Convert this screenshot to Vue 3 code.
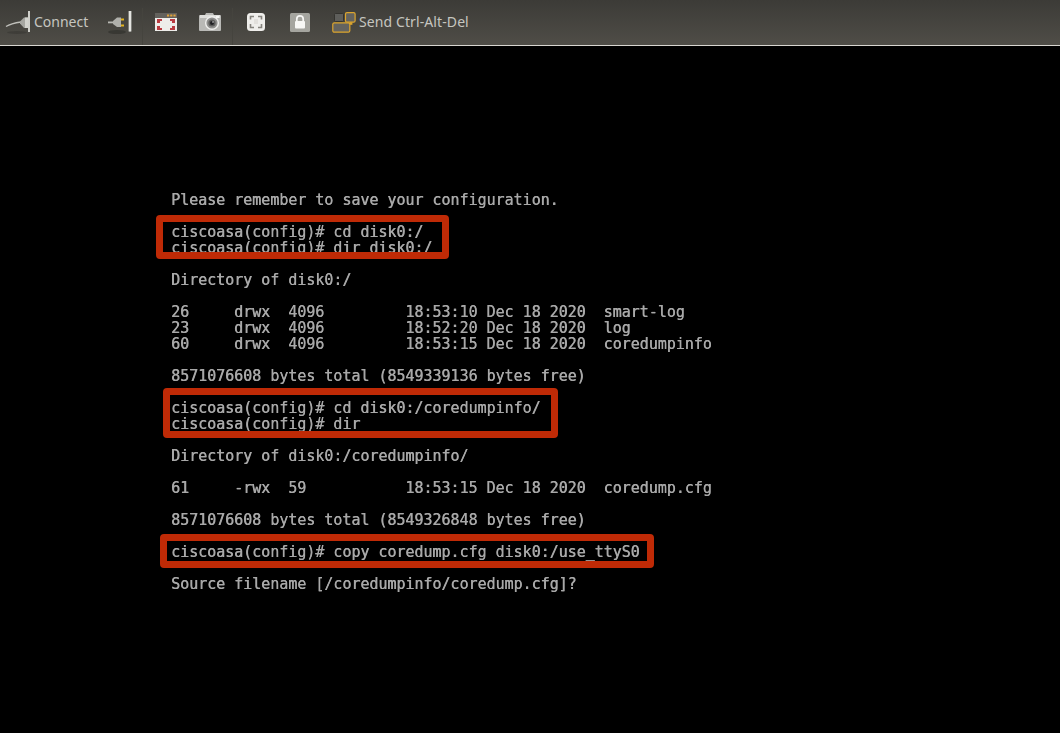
<script setup>
const lines = [
  'Please remember to save your configuration.',
  '',
  'ciscoasa(config)# cd disk0:/',
  'ciscoasa(config)# dir disk0:/',
  '',
  'Directory of disk0:/',
  '',
  '26     drwx  4096         18:53:10 Dec 18 2020  smart-log',
  '23     drwx  4096         18:52:20 Dec 18 2020  log',
  '60     drwx  4096         18:53:15 Dec 18 2020  coredumpinfo',
  '',
  '8571076608 bytes total (8549339136 bytes free)',
  '',
  'ciscoasa(config)# cd disk0:/coredumpinfo/',
  'ciscoasa(config)# dir',
  '',
  'Directory of disk0:/coredumpinfo/',
  '',
  '61     -rwx  59           18:53:15 Dec 18 2020  coredump.cfg',
  '',
  '8571076608 bytes total (8549326848 bytes free)',
  '',
  'ciscoasa(config)# copy coredump.cfg disk0:/use_ttyS0',
  '',
  'Source filename [/coredumpinfo/coredump.cfg]?'
]
</script>

<template>
  <div class="page">
    <header class="toolbar">
      <div class="tool connect">
        <svg width="27" height="32" viewBox="0 0 27 32">
          <ellipse cx="13" cy="24.5" rx="10" ry="1.5" fill="#3a3934" opacity=".7" />
          <path d="M2 18.5 C6 16 10 15 17 14" fill="none" stroke="#c0c0bb" stroke-width="1.4" />
          <path d="M16 13.5 L20 9.5 H24 V20 H20 L16 15.5 Z" fill="#a6a6a1" />
          <path d="M21 9.5 H24 V20 H21 Z" fill="#d2d2cd" />
          <rect x="24" y="3" width="2" height="21" fill="#cfcfca" />
        </svg>
        <span>Connect</span>
      </div>
      <div class="tool disconnect">
        <svg width="28" height="32" viewBox="0 0 28 32">
          <ellipse cx="13" cy="24" rx="9" ry="2" fill="#35342f" opacity=".8" />
          <rect x="4" y="13.5" width="6" height="1.8" fill="#b8b8b3" />
          <path d="M9 13 L13 9.5 H17 V19 H13 L9 16 Z" fill="#b0b0ab" />
          <rect x="17" y="10.5" width="3" height="2" fill="#e4b41f" />
          <rect x="17" y="16.5" width="3" height="2" fill="#e4b41f" />
          <rect x="24" y="3" width="4" height="20.5" fill="#7f7f7a" />
          <rect x="25" y="3" width="2" height="20.5" fill="#e4e4e0" />
        </svg>
      </div>
      <i class="sep" />
      <div class="tool video">
        <svg width="22" height="32" viewBox="0 0 22 32">
          <rect y="5" width="22" height="18" fill="#eeedea" />
          <rect y="5" width="22" height="5" fill="#63615c" />
          <rect x="12" y="6.5" width="2.2" height="2" fill="#e2a33a" />
          <rect x="15.2" y="6.5" width="2.2" height="2" fill="#e2a33a" />
          <rect x="18.4" y="6.5" width="2.2" height="2" fill="#e2a33a" />
          <path d="M2 11h5v2H5v2H2zM15 11h5v4h-3v-2h-2zM2 18h3v2h2v2H2zM17 18h3v4h-5v-2h2z" fill="#b93a40" />
        </svg>
      </div>
      <div class="tool camera">
        <svg width="22" height="32" viewBox="0 0 22 32">
          <path d="M1 7 H6 L7 5 H14 L15 7 H21 Q22 7 22 8 V22 Q22 23 21 23 H1 Q0 23 0 22 V8 Q0 7 1 7Z" fill="#b9b9b6" />
          <path d="M1 7 H21 V10 H1 Z" fill="#dededb" />
          <rect x="17" y="8" width="3" height="2" fill="#f7f7f5" />
          <circle cx="13" cy="15" r="7" fill="#efefed" />
          <circle cx="13" cy="15" r="5.6" fill="#8f8f8d" />
          <circle cx="13" cy="15" r="3.6" fill="#5b5b5a" />
          <circle cx="13" cy="15" r="2" fill="#1f1f22" />
          <circle cx="14" cy="14" r=".8" fill="#d5d5d5" />
        </svg>
      </div>
      <i class="sep" />
      <div class="tool keys">
        <svg width="18" height="32" viewBox="0 0 18 32">
          <rect y="5" width="18" height="18" rx="3.5" fill="#efeeeb" />
          <path d="M3.5 11.5V8.5H7M11 8.5h3.5v3M14.5 16v3.5H11M7 19.5H3.5V16" fill="none" stroke="#85837d" stroke-width="1.6" />
          <path d="M7 11h4v5H7z" fill="#e2e0dc" />
        </svg>
      </div>
      <div class="tool lock">
        <svg width="20" height="32" viewBox="0 0 20 32">
          <rect y="5" width="20" height="19" rx="1.5" fill="#a5a59f" />
          <path d="M6.8 13V11a3.2 3.2 0 0 1 6.4 0V13" fill="none" stroke="#f7f7f5" stroke-width="1.7" />
          <rect x="5" y="13" width="10" height="7.5" rx="1" fill="#f7f7f5" />
        </svg>
      </div>
      <div class="tool cad">
        <svg width="24" height="32" viewBox="0 0 24 32">
          <rect x="2.5" y="5.5" width="9" height="8" rx="1" fill="#5e5e5b" stroke="#34332f" />
          <rect x="13.5" y="4.6" width="9.6" height="9.6" rx="1.5" fill="#64635f" stroke="#dca52d" stroke-width="1.2" />
          <rect x="18" y="14.2" width="2.4" height="2.6" fill="#dca52d" />
          <rect x="0.8" y="14.8" width="17" height="9.4" rx="1.5" fill="#64635f" stroke="#dca52d" stroke-width="1.2" />
        </svg>
        <span class="cad-label">Send Ctrl-Alt-Del</span>
      </div>
    </header>
    <main class="screen">
      <pre class="console"><template v-for="(line, i) in lines" :key="i">{{ line }}
</template></pre>
      <div class="mark mark-a" />
      <div class="mark mark-b" />
      <div class="mark mark-c" />
    </main>
  </div>
</template>

<style scoped>
.page {
  width: 1060px;
  height: 733px;
  overflow: hidden;
  background: #000;
  display: flex;
  flex-direction: column;
}
.toolbar {
  height: 46px;
  box-sizing: border-box;
  flex: none;
  display: flex;
  align-items: flex-start;
  padding: 8px 0 0 4px;
  background: linear-gradient(#3c3b37, #4f4d47);
  border-bottom: 1px solid #d8d6d0;
  font: 14px "Noto Sans", sans-serif;
  color: #c6c6c0;
}
.tool {
  display: flex;
  align-items: flex-start;
  height: 32px;
}
.tool span {
  line-height: 28px;
}
.tool svg {
  display: block;
  flex: none;
}
.connect { gap: 3px; width: 100px; }
.disconnect { width: 38px; }
.sep {
  width: 1px;
  height: 37px;
  background: #45443e;
}
.video { margin-left: 12px; width: 44px; }
.camera { width: 33px; }
.keys { margin-left: 14px; width: 43px; }
.lock { width: 42px; }
.cad { gap: 3px; }
.cad-label { letter-spacing: 0.1px; }
.screen {
  flex: 1;
  position: relative;
  padding: 146px 0 0 171px;
}
.console {
  margin: 0;
  font: 14.97px/16px "DejaVu Sans Mono", monospace;
  color: #a8a8a8;
  text-shadow: 0.4px 0 0 #a8a8a8;
  filter: blur(0.3px);
}
.mark {
  position: absolute;
  box-sizing: border-box;
  border: 7px solid #bf2a06;
  border-radius: 4px;
}
.mark-a { left: 156px; top: 169px; width: 293px; height: 44px; }
.mark-b { left: 163px; top: 342px; width: 395px; height: 50px; }
.mark-c { left: 160px; top: 488px; width: 494px; height: 34px; }
</style>
